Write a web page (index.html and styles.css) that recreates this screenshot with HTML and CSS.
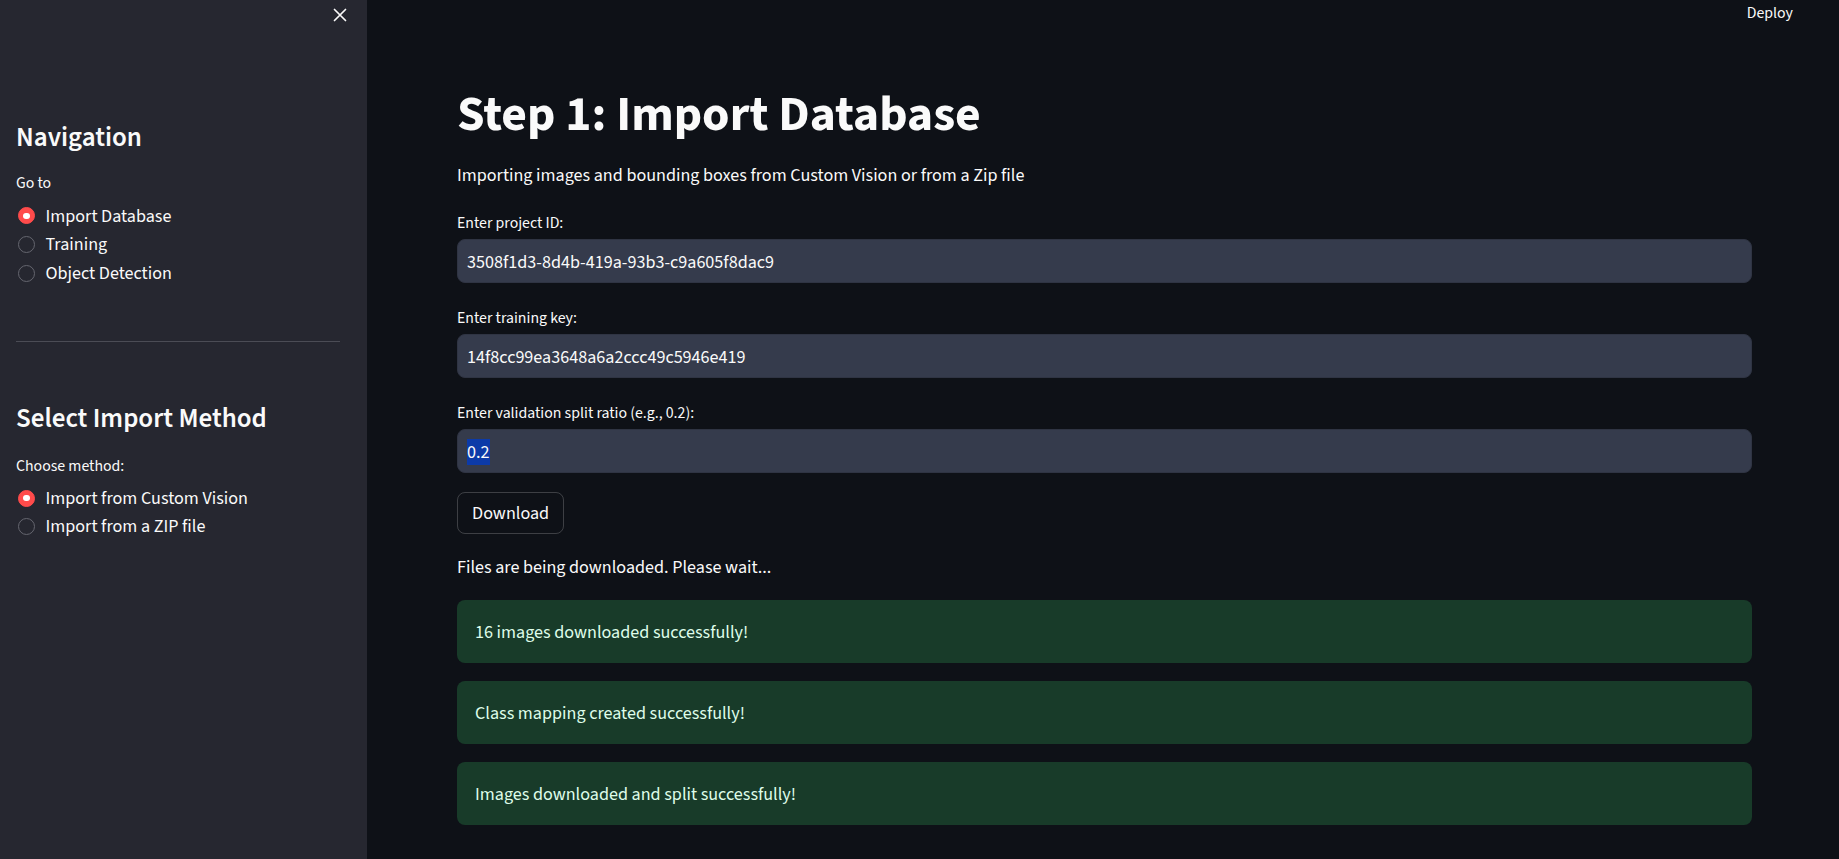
FILE: index.html
```html
<!DOCTYPE html>
<html lang="en">
<head>
<meta charset="utf-8">
<title>Step 1: Import Database</title>
<link rel="stylesheet" href="styles.css">
</head>
<body>
<aside class="sidebar">
  <div class="sb-top">
    <svg class="close" viewBox="0 0 14 14" aria-label="Close sidebar"><path d="M1.5 1.5 L12.5 12.5 M12.5 1.5 L1.5 12.5" stroke="#fafafa" stroke-width="1.7" stroke-linecap="round" fill="none"/></svg>
  </div>
  <h2 class="sb-h2 nav-h2">Navigation</h2>
  <div class="sb-label nav-label">Go to</div>
  <div class="radio-group nav-group">
    <div class="radio"><span class="dot on"></span><span>Import Database</span></div>
    <div class="radio"><span class="dot"></span><span>Training</span></div>
    <div class="radio"><span class="dot"></span><span>Object Detection</span></div>
  </div>
  <div class="divider"></div>
  <h2 class="sb-h2 method-h2">Select Import Method</h2>
  <div class="sb-label method-label">Choose method:</div>
  <div class="radio-group method-group">
    <div class="radio r2"><span class="dot on"></span><span>Import from Custom Vision</span></div>
    <div class="radio r2"><span class="dot"></span><span>Import from a ZIP file</span></div>
  </div>
</aside>
<main class="main">
  <header class="header"><span class="deploy">Deploy</span></header>
  <h1 class="title">Step 1: Import Database</h1>
  <p class="subtitle">Importing images and bounding boxes from Custom Vision or from a Zip file</p>
  <div class="field first">
    <div class="label">Enter project ID:</div>
    <div class="input">3508f1d3-8d4b-419a-93b3-c9a605f8dac9</div>
  </div>
  <div class="field">
    <div class="label">Enter training key:</div>
    <div class="input">14f8cc99ea3648a6a2ccc49c5946e419</div>
  </div>
  <div class="field">
    <div class="label">Enter validation split ratio (e.g., 0.2):</div>
    <div class="input"><span class="sel">0.2</span></div>
  </div>
  <button class="btn">Download</button>
  <p class="status">Files are being downloaded. Please wait...</p>
  <div class="alerts">
    <div class="alert">16 images downloaded successfully!</div>
    <div class="alert">Class mapping created successfully!</div>
    <div class="alert">Images downloaded and split successfully!</div>
  </div>
</main>
</body>
</html>
```
FILE: styles.css
```css
* { box-sizing: border-box; }
html, body { margin: 0; height: 100%; }
body {
  display: flex;
  background: #0e1117;
  color: #fafafa;
  font-family: "Source Sans 3", "Source Sans Pro", "Noto Sans", sans-serif;
  overflow: hidden;
}

/* ---------- sidebar ---------- */
.sidebar {
  width: 367px;
  flex: none;
  background: #262730;
  padding: 0 27px 0 16px;
  display: flex;
  flex-direction: column;
}
.sb-top {
  height: 30px;
  display: flex;
  justify-content: flex-end;
  padding-top: 8px;
  margin-right: -7px;
}
.close { width: 14px; height: 14px; display: block; }
.sb-h2 {
  margin: 0;
  font-size: 27px;
  font-weight: 600;
  line-height: 34px;
}
.nav-h2 { margin-top: 90.6px; }
.method-h2 { margin-top: 60.3px; }
.sb-label { font-size: 15.8px; line-height: 22px; }
.nav-label { margin-top: 17.8px; }
.method-label { margin-top: 18.5px; }
.radio-group { display: flex; flex-direction: column; }
.nav-group { margin-top: 7.25px; }
.method-group { margin-top: 7.2px; }
.radio {
  height: 28.7px;
  display: flex;
  align-items: center;
  gap: 10.5px;
  font-size: 18.1px;
  line-height: 28.7px;
}
.radio.r2 { height: 28.4px; line-height: 28.4px; }
.dot {
  width: 17px;
  height: 17px;
  border-radius: 50%;
  border: 1.5px solid #65666f;
  margin-left: 2px;
  flex: none;
}
.dot.on {
  background: #ff4b4b;
  border-color: #ff4b4b;
  display: flex;
  align-items: center;
  justify-content: center;
}
.dot.on::after {
  content: "";
  width: 6.5px;
  height: 6.5px;
  border-radius: 50%;
  background: #fff;
}
.divider { height: 1px; background: #4b4c55; margin-top: 53.25px; }

/* ---------- main ---------- */
.main {
  flex: 1;
  min-width: 0;
  padding: 0 87px 0 90px;
  display: flex;
  flex-direction: column;
}
.header {
  height: 24px;
  display: flex;
  justify-content: flex-end;
  margin-right: -41px;
  padding-top: 3.4px;
  font-size: 15.8px;
  line-height: 20px;
}
.title {
  margin: 62.4px 0 0;
  font-size: 49.6px;
  font-weight: 700;
  line-height: 58px;
}
.subtitle {
  margin: 16.8px 0 0;
  font-size: 18.1px;
  line-height: 28px;
}
.field { margin-top: 24.1px; }
.field.first { margin-top: 22.7px; }
.label { font-size: 15.8px; line-height: 22px; }
.input {
  margin-top: 4.9px;
  height: 44px;
  padding: 2px 9px 0;
  border: 1px solid #2f3443;
  border-radius: 8px;
  background: #353b4c;
  font-size: 18.1px;
  line-height: 40px;
  white-space: nowrap;
}
.sel { background: #0c3aa8; }
.btn {
  align-self: flex-start;
  margin-top: 19px;
  height: 42px;
  padding: 0 14px;
  border: 1px solid rgba(250, 250, 250, 0.2);
  border-radius: 8px;
  background: transparent;
  color: #fafafa;
  font-family: inherit;
  font-size: 18.1px;
  line-height: 40px;
}
.status {
  margin: 19.4px 0 0;
  font-size: 18.1px;
  line-height: 28px;
}
.alerts {
  margin-top: 18.6px;
  display: flex;
  flex-direction: column;
  gap: 18px;
}
.alert {
  height: 63px;
  padding: 18px 16px 17px 18px;
  border-radius: 8px;
  background: #183b29;
  color: #dffde9;
  font-size: 18.1px;
  line-height: 28px;
}
```
